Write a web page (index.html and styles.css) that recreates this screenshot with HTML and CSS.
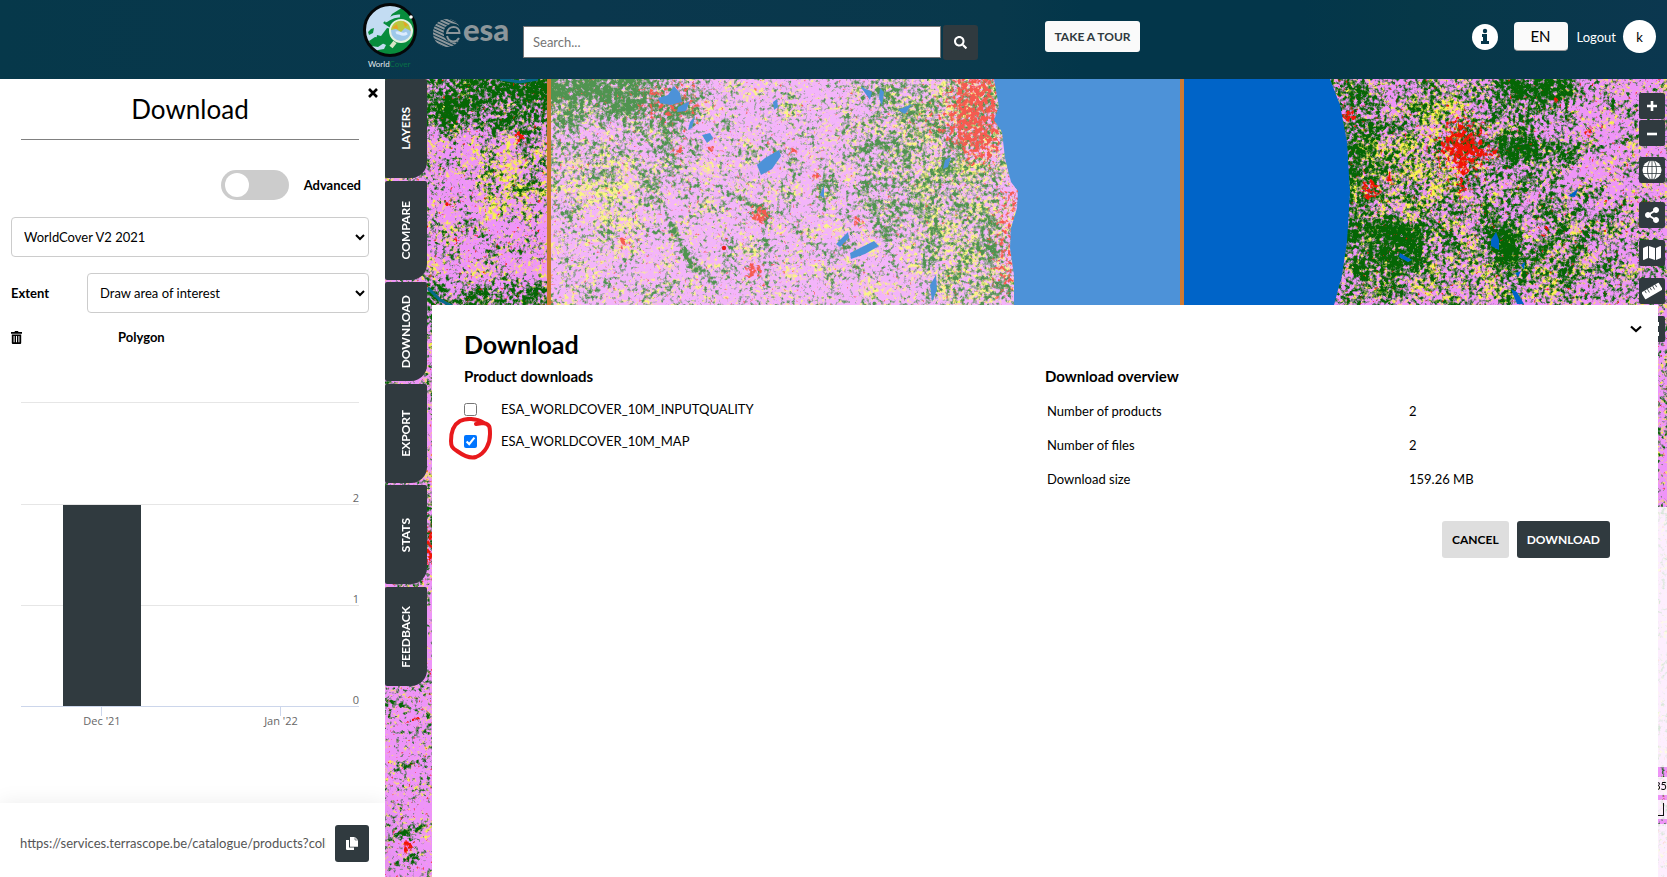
FILE: index.html
```html
<!DOCTYPE html>
<html lang="en">
<head>
<meta charset="utf-8">
<meta name="viewport" content="width=device-width, initial-scale=1">
<title>WorldCover - Download</title>
<link rel="stylesheet" href="styles.css">
</head>
<body>
<header class="topbar">
  <div class="brand">
    <svg class="worldcover-logo" viewBox="0 0 58 70" role="img" aria-label="WorldCover">
      <defs><clipPath id="globe"><circle cx="29" cy="27" r="25"/></clipPath></defs>
      <circle cx="29" cy="27" r="25" fill="#c3dcf2"/>
      <g clip-path="url(#globe)" fill="#088c3c">
        <path d="M22 20l3-3 3-1 3-5 8-5 7-2 10 8v34l-8 1-6 3-2 4 6 1 4-4v6l-12 2-4-3-8-3-9 2-8-1-1-5 6 1 3-3 6-1 2-4-4-2-6-2 1-6 4 1 3-4 3-4 5 1z"/>
        <path d="M7 29l3-3 3-1-1 5-4 2zM8 38l6-4 7 1 2 5-6 4-7-1z"/>
        <path d="M27 34l7 6 3 6-3-1-5-5-7-4z"/>
      </g>
      <path d="M24 18c5-2 8-6 15-5" fill="none" stroke="#c3dcf2" stroke-width="3"/>
      <circle cx="40" cy="28" r="11" fill="#9ec8ea" stroke="#e5f2df" stroke-width="2"/>
      <path d="M30 27c1-9 11-13 18-5l2 6-6-3-4 4-5-3z" fill="#bac840"/>
      <path d="M31 25l5-4 1 5zM42 18l5 4-3 2z" fill="#e6a325"/>
      <path d="M35 30c4-2 5 4 11 0" fill="none" stroke="#dcecff" stroke-width="3"/>
      <path d="M34 39l-4 5" stroke="#d9e5c7" stroke-width="4"/>
      <circle cx="29" cy="27" r="25.500" fill="none" stroke="#050708" stroke-width="3"/>
      <circle cx="50" cy="14" r="1.800" fill="#fff"/>
      <text x="7" y="64" class="logo-text"><tspan fill="#e5edef">World</tspan><tspan fill="#087047">Cover</tspan></text>
    </svg>
    <svg class="esa-logo" viewBox="0 0 78 30" role="img" aria-label="esa">
      <defs><pattern id="stripes" width="3" height="3" patternUnits="userSpaceOnUse" patternTransform="rotate(25)"><path d="M0 0h3v2H0z" fill="#8d969a"/></pattern></defs>
      <circle cx="14" cy="14" r="14" fill="url(#stripes)"/>
      <circle cx="20" cy="14" r="9.500" fill="#07374b"/>
      <path d="M26.500 14H14c1-8 12.500-8 12.500 0zM14 17c2 7 9 7 12 2" fill="none" stroke="#8d969a" stroke-width="2"/>
      <text x="30" y="22" class="esa-text">esa</text>
    </svg>
  </div>
  <form class="search">
    <input class="search-input" type="search" placeholder="Search..." aria-label="Search">
    <button class="search-button" type="button" aria-label="Search"><svg viewBox="0 0 512 512" width="13" height="13"><path fill="currentColor" d="M505 442.700L405.300 343c-4.500-4.500-10.600-7-17-7H372c27.600-35.300 44-79.700 44-128C416 93.100 322.900 0 208 0S0 93.100 0 208s93.100 208 208 208c48.300 0 92.700-16.400 128-44v16.300c0 6.400 2.500 12.500 7 17l99.700 99.700c9.400 9.400 24.600 9.400 33.900 0l28.300-28.300c9.400-9.400 9.400-24.600.1-34zM208 336c-70.700 0-128-57.200-128-128 0-70.700 57.200-128 128-128 70.700 0 128 57.200 128 128 0 70.700-57.200 128-128 128z"/></svg></button>
  </form>
  <button class="tour" type="button">TAKE A TOUR</button>
  <div class="account">
    <button class="info" type="button" aria-label="Information"><svg viewBox="0 0 26 26" width="26" height="26"><circle cx="13" cy="13" r="13" fill="#fff"/><path d="M10 10h5v7h2v3H9v-3h2v-4h-1z" fill="#07374b"/><circle cx="13" cy="7" r="2.200" fill="#07374b"/></svg></button>
    <button class="language" type="button">EN</button>
    <a class="logout" href="#">Logout</a>
    <span class="avatar">k</span>
  </div>
</header>

<main class="workspace">
  <aside class="sidebar">
    <button class="close" type="button" aria-label="Close"><svg viewBox="0 0 10 10" width="10" height="10"><path d="M1 1l8 8M9 1l-8 8" stroke="currentColor" stroke-width="2.600"/></svg></button>
    <h1 class="side-title">Download</h1>
    <label class="advanced"><input class="switch" type="checkbox" role="switch"><span>Advanced</span></label>
    <select class="field" aria-label="Product"><option>WorldCover V2 2021</option></select>
    <div class="extent-row"><label for="extent">Extent</label><select class="field" id="extent"><option>Draw area of interest</option></select></div>
    <div class="polygon-row">
      <button class="trash" type="button" aria-label="Delete polygon"><svg viewBox="0 0 11 13" width="11" height="13"><path d="M0 1h3.500l.5-1h3l.5 1H11v1.700H0z"/><path fill-rule="evenodd" d="M.8 3.500h9.400V12q0 1-1 1H1.800q-1 0-1-1zM2.600 5v6.300h1V5zM5 5v6.300h1V5zM7.400 5v6.300h1V5z"/></svg></button>
      <strong>Polygon</strong>
    </div>
    <svg class="chart" viewBox="0 0 338 330" role="img" aria-label="Number of products per month">
      <g stroke="#e6e6e6"><path d="M0 .5h338M0 102.500h338M0 203.500h338"/></g>
      <rect x="42" y="103" width="78" height="201" fill="#303a3f"/>
      <path d="M0 304.500h338M80.500 304v10M259.500 304v10" stroke="#ccd6eb"/>
      <g text-anchor="end"><text x="338" y="100">2</text><text x="338" y="201">1</text><text x="338" y="302">0</text></g>
      <g text-anchor="middle"><text x="81" y="323">Dec '21</text><text x="260" y="323">Jan '22</text></g>
    </svg>
    <div class="link-bar">
      <input class="link" type="text" readonly aria-label="Catalogue link" value="https://services.terrascope.be/catalogue/products?collection=urn:eop:VITO:ESA_WorldCover_10m_2021">
      <button class="copy" type="button" aria-label="Copy link"><svg viewBox="0 0 12 13" width="12" height="13"><path d="M0 3h3v7.500h5V13H1q-1 0-1-1z" fill="#fff"/><path d="M4 0h5l3 3v6.700H4z" fill="#fff"/><path d="M9 0v3h3" fill="none" stroke="#303a3f" stroke-width=".6"/></svg></button>
    </div>
  </aside>

  <section class="map" aria-label="Land cover map">
    <svg class="map-canvas" viewBox="385 79 1282 798" preserveAspectRatio="xMinYMin slice" aria-hidden="true">
      <defs>
        <filter id="green" x="385" y="79" width="1282" height="798" filterUnits="userSpaceOnUse" color-interpolation-filters="sRGB">
          <feTurbulence type="fractalNoise" baseFrequency=".26" numOctaves="3" seed="4" result="fine"/>
          <feTurbulence type="fractalNoise" baseFrequency=".05" numOctaves="3" seed="8" result="broad"/>
          <feComposite in="fine" in2="broad" operator="arithmetic" k2=".9" k3=".5" k4="-.2" result="n"/>
          <feComposite in="SourceGraphic" in2="n" operator="arithmetic" k2=".6" k3="1" k4="-.3"/>
          <feColorMatrix values="0 0 0 0 .02  0 0 0 0 .4  0 0 0 0 .02  0 0 0 4 -1.080"/>
        </filter>
        <filter id="yellow" x="385" y="79" width="1282" height="798" filterUnits="userSpaceOnUse" color-interpolation-filters="sRGB">
          <feTurbulence type="fractalNoise" baseFrequency=".28" numOctaves="3" seed="19" result="fine"/>
          <feTurbulence type="fractalNoise" baseFrequency=".05" numOctaves="3" seed="12" result="broad"/>
          <feComposite in="fine" in2="broad" operator="arithmetic" k2=".9" k3=".5" k4="-.2" result="n"/>
          <feComposite in="SourceGraphic" in2="n" operator="arithmetic" k2=".6" k3="1" k4="-.3"/>
          <feColorMatrix values="0 0 0 0 .97  0 0 0 0 .95  0 0 0 0 .3  0 0 0 4 -1.200"/>
        </filter>
        <filter id="red" x="385" y="79" width="1282" height="798" filterUnits="userSpaceOnUse" color-interpolation-filters="sRGB">
          <feTurbulence type="fractalNoise" baseFrequency=".24" numOctaves="3" seed="31" result="n"/>
          <feComposite in="SourceGraphic" in2="n" operator="arithmetic" k2=".6" k3="1" k4="-.3"/>
          <feColorMatrix values="0 0 0 0 .95  0 0 0 0 .08  0 0 0 0 .02  0 0 0 5 -2.050"/>
        </filter>
        <filter id="soft" x="-50%" y="-50%" width="200%" height="200%"><feGaussianBlur stdDeviation="9"/></filter>
        <filter id="soft-small" x="-50%" y="-50%" width="200%" height="200%"><feGaussianBlur stdDeviation="2"/></filter>
      </defs>
      <rect x="385" y="79" width="1282" height="798" fill="#ee94f8"/>
      <g filter="url(#yellow)">
        <rect x="385" y="79" width="1282" height="430" opacity=".08"/>
        <g filter="url(#soft)">
          <path d="M470 145h70v70h-60zM560 150h80v90h-60z" opacity=".25"/>
          <path d="M880 79h120v226H930z" opacity=".22"/>
          <path d="M1350 130h120v90h-120zM1410 79h60v50h-60z" opacity=".25"/>
          <path d="M1360 230h230v75h-230z" opacity=".15"/>
        </g>
      </g>
      <g filter="url(#green)">
        <rect x="385" y="79" width="1282" height="430" opacity=".05"/>
        <g filter="url(#soft)">
          <path d="M400 55h250v60l-90 12H400z" opacity=".46"/>
          <path d="M400 285h150v30H400z" opacity=".38"/>
          <path d="M500 130h200v70H500z" opacity=".12"/>
          <path d="M640 79h60v50h-60z" opacity=".35"/>
          <path d="M860 79h140v60l12 166h-60l-40-60-50-20z" opacity=".22"/>
          <path d="M1335 79h40v226h-35z" opacity=".4"/>
          <path d="M1370 79h200v226h-200z" opacity=".2"/>
          <path d="M1560 200h107v105h-107z" opacity=".15"/>
          <path d="M1490 75h90v25h-90zM1505 120h20v30h60l-10 10h-70zM1380 225h45v45h-45zM1490 230h30v40h-30z" opacity=".6"/>
          <path d="M385 500h50v100h-50z" opacity=".28"/>
        </g>
        <g filter="url(#soft-small)" fill="none" stroke="#000" stroke-width="3">
          <path d="M655 180l18 50 18 35 20 13 8 18M720 190l45 20 2 80M815 190l20-15 15-20 35-15M810 205l20-10" opacity=".7"/>
          <path d="M1500 305l50-60 40-50M1560 280l40-70M1590 150l55-15 15-40M1440 140l40 5 30-10" opacity=".7"/>
          <path d="M385 700l45 15M395 770l30-10M385 840l45-15M385 870l40-18" opacity=".7"/>
        </g>
      </g>
      <g filter="url(#red)">
        <g filter="url(#soft)">
          <path d="M952 70h45l3 85-25 12-25-30z" opacity=".65"/>
          <path d="M915 110h40v30h-35z" opacity=".25"/>
          <path d="M1003 180h15l-5 115h-14z" opacity=".65"/>
          <path d="M640 85h60v35h-55z" opacity=".42"/>
          <ellipse cx="1463" cy="148" rx="27" ry="20" opacity=".5"/>
          <path d="M1440 115h40v60h-25z" opacity=".3"/>
        </g>
        <g filter="url(#soft-small)" opacity=".6">
          <circle cx="1370" cy="190" r="10"/><circle cx="1350" cy="115" r="7"/><circle cx="1390" cy="180" r="5"/>
          <circle cx="760" cy="215" r="10"/><circle cx="754" cy="270" r="9"/><circle cx="624" cy="242" r="6"/><circle cx="520" cy="137" r="6"/><circle cx="448" cy="203" r="5"/><circle cx="678" cy="150" r="5"/><circle cx="712" cy="150" r="5"/><circle cx="815" cy="175" r="5"/><circle cx="858" cy="222" r="5"/><circle cx="793" cy="150" r="5"/><circle cx="458" cy="240" r="3"/><circle cx="1545" cy="230" r="4"/><circle cx="1590" cy="132" r="5"/><circle cx="1557" cy="100" r="4"/>
          <ellipse cx="430" cy="547" rx="5" ry="20"/><circle cx="413" cy="721" r="4"/><circle cx="408" cy="846" r="6"/>
          <path d="M1459 100l8 95-8 4zM1435 147l65 3v8z"/>
        </g>
      </g>
      <g fill="#0064c8">
        <path d="M658 98l10-3 6-9 6 7 2 9-12 3-10-2zM678 107l12-6-4 10-9 1zM690 122l5-6-3 12-4 2zM702 135l8-2 3 5-6 5zM757 165l8-7 14-8 2 6-9 13-11 6zM773 102l4-3 1 8-4 3zM850 253l14-7 10-5 5 5-14 8-14 5zM836 244l12-12 1 6-9 9zM898 110l14-6-7 10zM945 160l6-3-3 10-5 2zM930 285l6-10 1 15-5 12zM820 195l4-10v13z"/>
        <path d="M860 86l10 14 2-8zM880 88l4 4-2 14-3-8z"/>
        <path d="M1491 240l5-8 3 8v10l-8-4zM1511 289l6 3 7 12h-7zM1568 196l10-7-3 8zM1521 265l4-3-1 8zM1400 253l12 7-4 2-9-5zM1515 273l6-2-3 6z"/>
        <path d="M994 79l5 28-5 13 8 12 3 26 6 24 7 9-1 17-6 20-1 20 4 27v30h320l8-30 5-33 3-50-3-50-7-37-10-26z"/>
      </g>
      <path d="M428 288l12 12 18 9M500 79l20 3 18-3" fill="none" stroke="#086a8c" stroke-width="3"/>
      <rect x="549" y="40" width="633" height="420" fill="#fff" fill-opacity=".3" stroke="#cf7a32" stroke-width="4"/>
      <circle cx="724" cy="248" r="2.200" fill="#e81c1c"/>
    </svg>

    <nav class="tabs" aria-label="Panels">
      <button class="tab" type="button"><span>LAYERS</span></button>
      <button class="tab" type="button"><span>COMPARE</span></button>
      <button class="tab" type="button"><span>DOWNLOAD</span></button>
      <button class="tab" type="button"><span>EXPORT</span></button>
      <button class="tab" type="button"><span>STATS</span></button>
      <button class="tab" type="button"><span>FEEDBACK</span></button>
    </nav>

    <div class="tools">
      <div class="zoom">
        <button class="tool" type="button" aria-label="Zoom in"><svg viewBox="0 0 12 12" width="12" height="12"><path d="M6 1v10M1 6h10" stroke="#fff" stroke-width="2.600"/></svg></button>
        <button class="tool" type="button" aria-label="Zoom out"><svg viewBox="0 0 12 12" width="12" height="12"><path d="M1 7h10" stroke="#fff" stroke-width="2.600"/></svg></button>
      </div>
      <button class="tool tool-globe" type="button" aria-label="Whole world"><svg viewBox="0 0 20 20" width="20" height="20"><circle cx="10" cy="10" r="9.500" fill="#fff"/><g fill="none" stroke="#303a3f" stroke-width=".8"><ellipse cx="10" cy="10" rx="4.500" ry="10"/><path d="M10 0v20M0 6.500h20M0 13.500h20"/></g></svg></button>
      <div class="map-tools">
        <button class="tool" type="button" aria-label="Share"><svg viewBox="0 0 448 512" width="14" height="16"><path fill="#fff" d="M352 320c-22.608 0-43.387 7.819-59.790 20.895l-102.486-64.054a96.551 96.551 0 0 0 0-41.683l102.486-64.054C308.613 184.181 329.392 192 352 192c53.019 0 96-42.981 96-96S405.019 0 352 0s-96 42.981-96 96c0 7.158.79 14.130 2.276 20.841L155.790 180.895C139.387 167.819 118.608 160 96 160c-53.019 0-96 42.981-96 96s42.981 96 96 96c22.608 0 43.387-7.819 59.790-20.895l102.486 64.054A96.301 96.301 0 0 0 256 416c0 53.019 42.981 96 96 96s96-42.981 96-96-42.981-96-96-96z"/></svg></button>
        <button class="tool" type="button" aria-label="Base map"><svg viewBox="0 0 576 512" width="18" height="16"><path fill="#fff" d="M0 117.660v346.320c0 11.320 11.430 19.060 21.940 14.860L160 416V32L20.120 87.950A32.006 32.006 0 0 0 0 117.660zM192 416l192 64V96L192 32v384zM554.060 33.160L416 96v384l139.880-55.950A31.996 31.996 0 0 0 576 394.340V48.020c0-11.320-11.430-19.060-21.940-14.860z"/></svg></button>
        <button class="tool" type="button" aria-label="Measure"><svg viewBox="0 0 20 20" width="20" height="20"><g transform="rotate(-30 10 10)"><rect x="0" y="6" width="20" height="8" rx="1" fill="#fff"/><path d="M4 6v3M7 6v4M10 6v3M13 6v4M16 6v3" stroke="#303a3f" stroke-width=".8"/></g></svg></button>
        <button class="tool" type="button" aria-label="Screenshot"><svg viewBox="0 0 16 16" width="16" height="16"><path d="M0 1h15v4h-4v6h4v4H0z" fill="#fff"/></svg></button>
      </div>
    </div>

    <div class="map-info">
      <div class="legend"></div>
      <div class="coordinates">35</div>
      <div class="scale"><span class="scale-line"></span></div>
      <div class="attribution"></div>
    </div>

    <section class="sheet">
      <button class="collapse" type="button" aria-label="Collapse"><svg viewBox="0 0 12 8" width="12" height="8"><path d="M1 1.500l5 4.500 5-4.500" fill="none" stroke="#000" stroke-width="2.200"/></svg></button>
      <h2 class="sheet-title">Download</h2>
      <div class="columns">
        <div>
          <h3 class="subtitle">Product downloads</h3>
          <label class="product"><input type="checkbox"><span>ESA_WORLDCOVER_10M_INPUTQUALITY</span></label>
          <label class="product"><input type="checkbox" checked><span>ESA_WORLDCOVER_10M_MAP</span>
            <svg class="mark" viewBox="0 0 44 44" aria-hidden="true"><path d="M35 6C27 1 17 1 11 4 4 8 2 17 2 24c0 5 1 7 6 10 7 5 13 8 19 6 10-4 14-14 14-23 0-7 0-10-7-11l-7 1" fill="none" stroke="#e8191c" stroke-width="4" stroke-linecap="round" stroke-linejoin="round"/></svg>
          </label>
        </div>
        <div>
          <h3 class="subtitle">Download overview</h3>
          <table class="overview">
            <tr><th scope="row">Number of products</th><td>2</td></tr>
            <tr><th scope="row">Number of files</th><td>2</td></tr>
            <tr><th scope="row">Download size</th><td>159.26 MB</td></tr>
          </table>
          <div class="actions"><button class="action" type="button">CANCEL</button><button class="action primary" type="button">DOWNLOAD</button></div>
        </div>
      </div>
    </section>
  </section>
</main>
</body>
</html>
```

FILE: styles.css
```css
* { box-sizing: border-box; }

body {
  margin: 0;
  min-height: 100vh;
  display: flex;
  flex-direction: column;
  font: 13px/20px Lato, "Open Sans", sans-serif;
  color: #000;
}

button, input, select { font: inherit; color: inherit; }
button { border: 0; padding: 0; background: none; cursor: pointer; display: grid; place-items: center; }
h1, h2, h3 { margin: 0; }

.topbar {
  height: 79px;
  padding: 0 11px 0 361px;
  display: flex;
  align-items: center;
  background: linear-gradient(90deg, #06384a, #0a374d 35%, #08384b 60%, #03364a 65%, #03364a 78%, #063848 85%, #0b374f);
  color: #fff;
}
.brand { display: flex; gap: 14px; align-items: flex-start; margin-bottom: 4px; }
.worldcover-logo { width: 58px; height: 70px; }
.logo-text { font: 8px Lato, sans-serif; }
.esa-logo { width: 78px; height: 30px; margin-top: 16px; overflow: visible; }
.esa-text { font: 900 31px Lato, sans-serif; fill: #8d969a; }
.search { display: flex; align-items: center; gap: 2px; margin: 5px 0 0 12px; }
.search-input {
  width: 418px;
  height: 32px;
  padding: 0 9px;
  border: 1px solid #767676;
  background: #fff;
  color: #444;
  appearance: none;
}
.search-input::placeholder { color: #757575; }
.search-button { width: 35px; height: 35px; border-radius: 3px; background: #303a3f; color: #fff; }
.tour {
  width: 95px;
  height: 31px;
  margin: 0 0 6px 67px;
  border-radius: 3px;
  background: #fafafa;
  color: #303a3f;
  font-size: 12px;
  font-weight: 700;
}
.account { margin: 0 0 6px auto; display: flex; align-items: center; }
.language { width: 54px; height: 29px; margin: 0 9px 0 16px; border-radius: 4px; background: #fafafa; border-bottom: 1px solid #999; color: #000; font-size: 15px; }
.logout { color: #fff; text-decoration: none; margin-right: 7px; }
.avatar { width: 33px; height: 33px; border-radius: 50%; background: #fff; color: #000; display: grid; place-items: center; }

.workspace { flex: 1; display: flex; }

.sidebar { position: relative; z-index: 2; width: 385px; display: flex; flex-direction: column; background: #fff; padding-top: 14px; }
.close { position: absolute; top: 9px; right: 7px; }
.side-title {
  margin: 0 26px 30px 21px;
  padding-bottom: 14px;
  border-bottom: 1px solid #808080;
  font-size: 26px;
  line-height: 32px;
  font-weight: 400;
  text-align: center;
}
.advanced { display: flex; align-items: center; gap: 15px; margin: 0 24px 17px auto; font-weight: 700; }
.switch { appearance: none; width: 68px; height: 30px; margin: 0; padding: 3px 4px; border-radius: 15px; background: #ccc; }
.switch::before { content: ""; display: block; width: 24px; height: 24px; border-radius: 50%; background: #fff; }
.field { height: 40px; margin: 0 16px 0 11px; padding: 0 0 0 8px; border: 1px solid #ccc; border-radius: 4px; background: #fff; }
.extent-row { display: flex; align-items: center; margin: 16px 16px 14px 11px; font-weight: 700; }
.extent-row label { width: 76px; }
.extent-row .field { flex: 1; margin: 0; font-weight: 400; }
.polygon-row { display: flex; align-items: center; gap: 96px; margin-left: 11px; }
.chart { width: 338px; height: 330px; margin: 55px 26px 40px 21px; overflow: visible; }
.chart text { font: 11px "Open Sans", sans-serif; fill: #666; }
.link-bar {
  margin-top: auto;
  height: 74px;
  padding: 6px 16px 0 18px;
  display: flex;
  align-items: center;
  gap: 9px;
  box-shadow: 0 0 20px rgba(0, 0, 0, .08);
}
.link { flex: 1; min-width: 0; border: 0; padding: 0 0 0 2px; color: #555; }
.copy { width: 34px; height: 37px; border-radius: 3px; background: #303a3f; }

.map { position: relative; flex: 1; min-width: 0; overflow: hidden; background: #ee94f8; }
.map-canvas { position: absolute; width: 100%; height: 100%; }
.tabs { position: relative; width: 42px; height: 607px; display: flex; flex-direction: column; justify-content: space-between; }
.tab { height: 99px; border-radius: 2px 2px 16px 2px; background: #303a3f; color: #fff; font-size: 12px; font-weight: 700; }
.tab span { writing-mode: vertical-rl; transform: rotate(180deg); }

.tools { position: absolute; top: 14px; right: 2px; display: flex; flex-direction: column; }
.zoom { display: grid; gap: 1px; }
.tool { width: 26px; height: 26px; border-radius: 2px; background: #303a3f; }
.tool-globe { margin: 11px 0 19px; }
.map-tools { display: grid; gap: 12px; }

.map-info { position: absolute; top: 428px; right: 0; bottom: 0; width: 260px; display: flex; flex-direction: column; gap: 5px; }
.legend, .coordinates, .scale, .attribution { background: rgba(255, 255, 255, .84); }
.legend { height: 260px; margin-bottom: 5px; }
.coordinates { height: 18px; font-size: 11px; line-height: 18px; text-align: right; }
.scale { height: 19px; padding: 3px; }
.scale-line { display: block; height: 13px; border: solid #111; border-width: 0 1px 1px; }
.attribution { flex: 1; }

.sheet { position: absolute; top: 226px; right: 9px; bottom: 0; left: 47px; padding: 23px 32px; background: #fff; }
.collapse { position: absolute; top: 20px; right: 16px; }
.sheet-title { font-size: 25px; line-height: 32px; }
.columns { display: grid; grid-template-columns: 1fr 1fr; padding-top: 6px; }
.subtitle { font-size: 15px; line-height: 20px; }
.product { position: relative; display: flex; align-items: center; gap: 24px; width: max-content; margin-top: 12px; }
.subtitle + .product { margin-top: 13px; }
.product input { width: 13px; height: 13px; margin: 0; }
.mark { position: absolute; left: -15px; top: -14px; width: 44px; height: 44px; pointer-events: none; }
.overview { width: 100%; margin-top: 7px; border-spacing: 2px; }
.overview th, .overview td { height: 32px; padding: 0; text-align: left; font-weight: 400; }
.overview th { width: 360px; }
.actions { display: flex; justify-content: flex-end; gap: 8px; margin: 24px 16px 0 0; }
.action { height: 37px; padding: 0 10px; border-radius: 3px; background: #dedede; color: #000; font-size: 12px; font-weight: 700; }
.action.primary { background: #303a3f; color: #fff; }
```
